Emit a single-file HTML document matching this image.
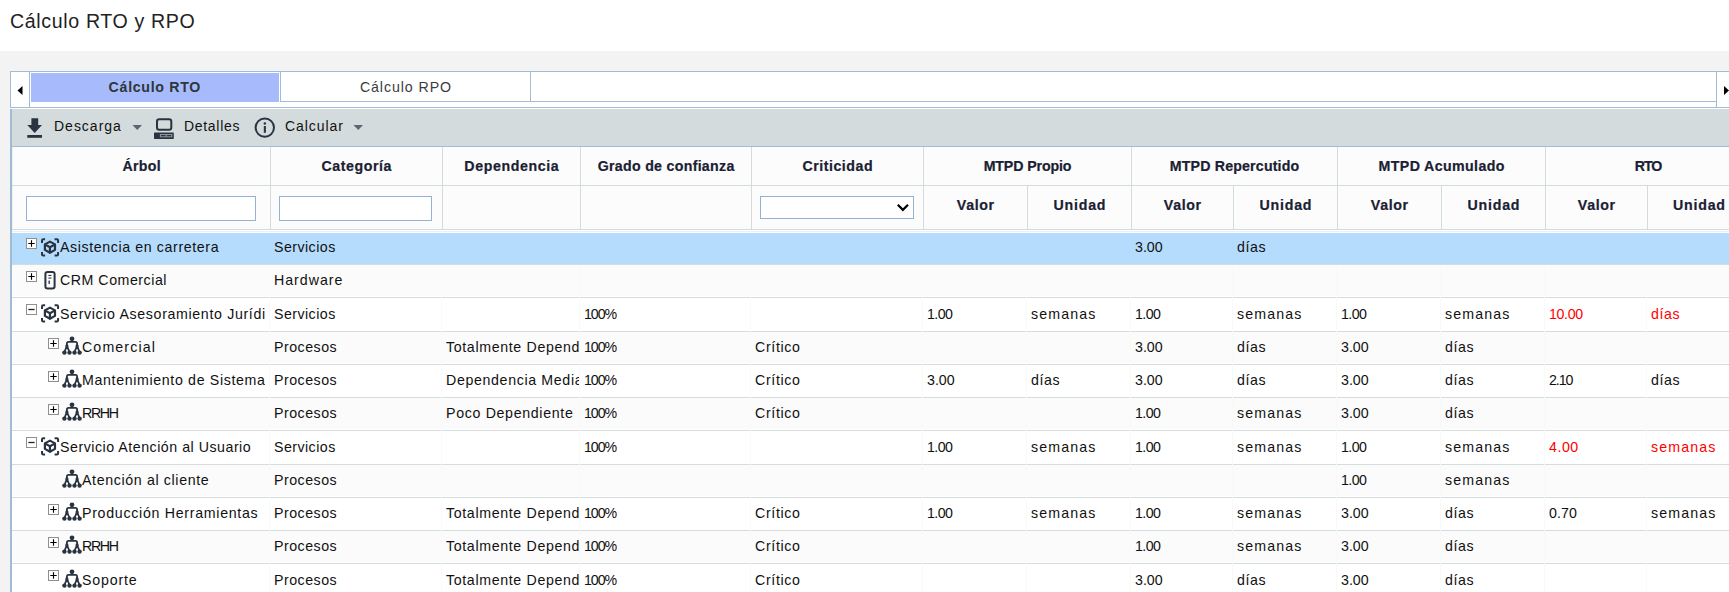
<!DOCTYPE html>
<html><head><meta charset="utf-8"><title>Cálculo RTO y RPO</title>
<style>
html,body{margin:0;padding:0;width:1729px;height:592px;overflow:hidden;background:#fff}
body{position:relative;font-family:"Liberation Sans", sans-serif}
.t{position:absolute;white-space:nowrap;overflow:hidden;font-family:"Liberation Sans", sans-serif}
</style></head><body>
<div style="position:absolute;left:0px;top:0px;width:1729px;height:51px;background:#fff"></div><div style="position:absolute;left:0px;top:51px;width:1729px;height:541px;background:#f3f3f3"></div><div class="t" style="left:10px;top:6px;width:400px;height:30px;line-height:30px;text-align:left;font-size:19.6px;color:#222;letter-spacing:0.64px">Cálculo RTO y RPO</div><div style="position:absolute;left:10px;top:71px;width:1719px;height:37px;background:#fff;border-top:1px solid #a3bcd6;border-left:1px solid #a3bcd6;border-bottom:1px solid #a3bcd6;box-sizing:border-box"></div><div style="position:absolute;left:29px;top:72px;width:1px;height:35px;background:#a3bcd6"></div><svg style="position:absolute;left:16px;top:85px" width="8" height="11"><path d="M1.5 5.5 L6.5 1 L6.5 10 Z" fill="#000"/></svg><div style="position:absolute;left:31px;top:73px;width:248px;height:29px;background:#a7bbfc"></div><div class="t" style="left:30px;top:73px;width:249px;height:29px;line-height:29px;text-align:center;font-size:14.2px;font-weight:bold;color:#2e3639;letter-spacing:0.69px;padding-left:0.69px;box-sizing:border-box">Cálculo RTO</div><div style="position:absolute;left:280px;top:71px;width:251px;height:31px;border:1px solid #a3bcd6;box-sizing:border-box;background:#fff"></div><div class="t" style="left:281px;top:73px;width:249px;height:29px;line-height:29px;text-align:center;font-size:14.2px;color:#3c3c3c;letter-spacing:0.92px;padding-left:0.92px;box-sizing:border-box">Cálculo RPO</div><div style="position:absolute;left:530px;top:101px;width:1186px;height:1px;background:#a3bcd6"></div><div style="position:absolute;left:1716px;top:72px;width:1px;height:35px;background:#a3bcd6"></div><svg style="position:absolute;left:1722px;top:85px" width="8" height="11"><path d="M2 1 L7 5.5 L2 10 Z" fill="#000"/></svg><div style="position:absolute;left:10px;top:108px;width:1719px;height:1px;background:#fff"></div><div style="position:absolute;left:10px;top:109px;width:1719px;height:37px;background:#d3dbdc"></div><div style="position:absolute;left:10px;top:146px;width:1719px;height:1px;background:#a3bcd6"></div><div style="position:absolute;left:10px;top:109px;width:2px;height:483px;background:#9fbbd6"></div><svg style="position:absolute;left:26px;top:117px" width="18" height="22" viewBox="0 0 18 22"><path d="M5.4 1.3 H12.2 V8.1 H16 L8.7 15.9 L1.3 8.1 H5.4 Z" fill="#2a3441"/><rect x="1.3" y="18" width="14.7" height="2.8" fill="#2a3441"/></svg><div class="t" style="left:54px;top:108px;width:80px;height:37px;line-height:37px;text-align:left;font-size:14px;color:#111;letter-spacing:0.99px">Descarga</div><svg style="position:absolute;left:132px;top:124px" width="11" height="7"><path d="M0.5 1 H10 L5.25 6 Z" fill="#5b6670"/></svg><svg style="position:absolute;left:153px;top:117px" width="22" height="23" viewBox="0 0 22 23"><rect x="4" y="2.3" width="14.3" height="10.5" rx="2.2" fill="none" stroke="#2a3441" stroke-width="2"/><rect x="1" y="15.5" width="19.8" height="6.4" rx="0.6" fill="#2a3441"/><rect x="6.9" y="17" width="12.4" height="3.3" fill="#8d969b"/><rect x="8" y="18" width="4.6" height="1.3" fill="#2a3441"/><rect x="13.8" y="18" width="4.3" height="1.3" fill="#2a3441"/></svg><div class="t" style="left:184px;top:108px;width:80px;height:37px;line-height:37px;text-align:left;font-size:14px;color:#111;letter-spacing:0.69px">Detalles</div><svg style="position:absolute;left:254px;top:117px" width="22" height="22" viewBox="0 0 22 22"><circle cx="10.8" cy="10.6" r="9.2" fill="none" stroke="#2a3441" stroke-width="2"/><rect x="9.8" y="9" width="2.1" height="6.8" fill="#2a3441"/><circle cx="10.85" cy="6.6" r="1.25" fill="#2a3441"/></svg><div class="t" style="left:285px;top:108px;width:80px;height:37px;line-height:37px;text-align:left;font-size:14px;color:#111;letter-spacing:0.93px">Calcular</div><svg style="position:absolute;left:353px;top:124px" width="11" height="7"><path d="M0.5 1 H10 L5.25 6 Z" fill="#5b6670"/></svg><div style="position:absolute;left:12px;top:147px;width:1717px;height:83px;background:#fcfcfc"></div><div style="position:absolute;left:12px;top:147px;width:1px;height:83px;background:#eef1f1"></div><div style="position:absolute;left:270px;top:147px;width:1px;height:83px;background:#d3dcdc"></div><div style="position:absolute;left:442px;top:147px;width:1px;height:83px;background:#d3dcdc"></div><div style="position:absolute;left:580px;top:147px;width:1px;height:83px;background:#d3dcdc"></div><div style="position:absolute;left:751px;top:147px;width:1px;height:83px;background:#d3dcdc"></div><div style="position:absolute;left:923px;top:147px;width:1px;height:83px;background:#d3dcdc"></div><div style="position:absolute;left:1131px;top:147px;width:1px;height:83px;background:#d3dcdc"></div><div style="position:absolute;left:1337px;top:147px;width:1px;height:83px;background:#d3dcdc"></div><div style="position:absolute;left:1545px;top:147px;width:1px;height:83px;background:#d3dcdc"></div><div style="position:absolute;left:1027px;top:186px;width:1px;height:44px;background:#d3dcdc"></div><div style="position:absolute;left:1233px;top:186px;width:1px;height:44px;background:#d3dcdc"></div><div style="position:absolute;left:1441px;top:186px;width:1px;height:44px;background:#d3dcdc"></div><div style="position:absolute;left:1647px;top:186px;width:1px;height:44px;background:#d3dcdc"></div><div style="position:absolute;left:12px;top:185px;width:1717px;height:1px;background:#d3dcdc"></div><div style="position:absolute;left:12px;top:229px;width:1717px;height:1px;background:#d3dcdc"></div><div style="position:absolute;left:12px;top:230px;width:1717px;height:3px;background:#fff"></div><div style="position:absolute;left:12px;top:231px;width:1717px;height:1px;background:#eef0f0"></div><div class="t" style="left:13px;top:148px;width:257px;height:37px;line-height:37px;text-align:center;font-size:14.2px;font-weight:bold;color:#1b2033;letter-spacing:0.3px;padding-left:0.3px;box-sizing:border-box;-webkit-text-stroke:0.2px #1b2033">Árbol</div><div class="t" style="left:271px;top:148px;width:171px;height:37px;line-height:37px;text-align:center;font-size:14.2px;font-weight:bold;color:#1b2033;letter-spacing:0.56px;padding-left:0.56px;box-sizing:border-box;-webkit-text-stroke:0.2px #1b2033">Categoría</div><div class="t" style="left:443px;top:148px;width:137px;height:37px;line-height:37px;text-align:center;font-size:14.2px;font-weight:bold;color:#1b2033;letter-spacing:0.61px;padding-left:0.61px;box-sizing:border-box;-webkit-text-stroke:0.2px #1b2033">Dependencia</div><div class="t" style="left:581px;top:148px;width:170px;height:37px;line-height:37px;text-align:center;font-size:14.2px;font-weight:bold;color:#1b2033;letter-spacing:0.29px;padding-left:0.29px;box-sizing:border-box;-webkit-text-stroke:0.2px #1b2033">Grado de confianza</div><div class="t" style="left:752px;top:148px;width:171px;height:37px;line-height:37px;text-align:center;font-size:14.2px;font-weight:bold;color:#1b2033;letter-spacing:0.53px;padding-left:0.53px;box-sizing:border-box;-webkit-text-stroke:0.2px #1b2033">Criticidad</div><div class="t" style="left:924px;top:148px;width:207px;height:37px;line-height:37px;text-align:center;font-size:14.2px;font-weight:bold;color:#1b2033;letter-spacing:-0.12px;padding-left:-0.12px;box-sizing:border-box;-webkit-text-stroke:0.2px #1b2033">MTPD Propio</div><div class="t" style="left:1132px;top:148px;width:205px;height:37px;line-height:37px;text-align:center;font-size:14.2px;font-weight:bold;color:#1b2033;letter-spacing:0.17px;padding-left:0.17px;box-sizing:border-box;-webkit-text-stroke:0.2px #1b2033">MTPD Repercutido</div><div class="t" style="left:1338px;top:148px;width:207px;height:37px;line-height:37px;text-align:center;font-size:14.2px;font-weight:bold;color:#1b2033;letter-spacing:0.38px;padding-left:0.38px;box-sizing:border-box;-webkit-text-stroke:0.2px #1b2033">MTPD Acumulado</div><div class="t" style="left:1546px;top:148px;width:204px;height:37px;line-height:37px;text-align:center;font-size:14.2px;font-weight:bold;color:#1b2033;letter-spacing:-1.0px;padding-left:-1.0px;box-sizing:border-box;-webkit-text-stroke:0.2px #1b2033">RTO</div><div class="t" style="left:924px;top:184px;width:103px;height:43px;line-height:43px;text-align:center;font-size:14.2px;font-weight:bold;color:#1b2033;letter-spacing:0.65px;padding-left:0.65px;box-sizing:border-box;-webkit-text-stroke:0.2px #1b2033">Valor</div><div class="t" style="left:1028px;top:184px;width:103px;height:43px;line-height:43px;text-align:center;font-size:14.2px;font-weight:bold;color:#1b2033;letter-spacing:0.8px;padding-left:0.8px;box-sizing:border-box;-webkit-text-stroke:0.2px #1b2033">Unidad</div><div class="t" style="left:1132px;top:184px;width:101px;height:43px;line-height:43px;text-align:center;font-size:14.2px;font-weight:bold;color:#1b2033;letter-spacing:0.65px;padding-left:0.65px;box-sizing:border-box;-webkit-text-stroke:0.2px #1b2033">Valor</div><div class="t" style="left:1234px;top:184px;width:103px;height:43px;line-height:43px;text-align:center;font-size:14.2px;font-weight:bold;color:#1b2033;letter-spacing:0.8px;padding-left:0.8px;box-sizing:border-box;-webkit-text-stroke:0.2px #1b2033">Unidad</div><div class="t" style="left:1338px;top:184px;width:103px;height:43px;line-height:43px;text-align:center;font-size:14.2px;font-weight:bold;color:#1b2033;letter-spacing:0.65px;padding-left:0.65px;box-sizing:border-box;-webkit-text-stroke:0.2px #1b2033">Valor</div><div class="t" style="left:1442px;top:184px;width:103px;height:43px;line-height:43px;text-align:center;font-size:14.2px;font-weight:bold;color:#1b2033;letter-spacing:0.8px;padding-left:0.8px;box-sizing:border-box;-webkit-text-stroke:0.2px #1b2033">Unidad</div><div class="t" style="left:1546px;top:184px;width:101px;height:43px;line-height:43px;text-align:center;font-size:14.2px;font-weight:bold;color:#1b2033;letter-spacing:0.65px;padding-left:0.65px;box-sizing:border-box;-webkit-text-stroke:0.2px #1b2033">Valor</div><div class="t" style="left:1648px;top:184px;width:102px;height:43px;line-height:43px;text-align:center;font-size:14.2px;font-weight:bold;color:#1b2033;letter-spacing:0.8px;padding-left:0.8px;box-sizing:border-box;-webkit-text-stroke:0.2px #1b2033">Unidad</div><div style="position:absolute;left:26px;top:196px;width:230px;height:25px;background:#fff;border:1px solid #94b1d6;box-sizing:border-box"></div><div style="position:absolute;left:279px;top:196px;width:153px;height:25px;background:#fff;border:1px solid #94b1d6;box-sizing:border-box"></div><div style="position:absolute;left:760px;top:196px;width:154px;height:23px;background:#fff;border:1px solid #94b1d6;box-sizing:border-box"></div><svg style="position:absolute;left:896px;top:202px" width="14" height="11"><path d="M1.8 2.8 L6.9 7.9 L12 2.8" fill="none" stroke="#000" stroke-width="2.2"/></svg><div style="position:absolute;left:12px;top:233px;width:1717px;height:31px;background:#b5dcfd"></div><div style="position:absolute;left:12px;top:264px;width:1717px;height:1px;background:#d5dcdc"></div><svg style="position:absolute;left:26px;top:238px" width="11" height="11" viewBox="0 0 11 11"><rect x="0.5" y="0.5" width="10" height="10" fill="#fff" stroke="#8f8f8f" stroke-width="1"/><path d="M5.5 2.3 V8.7 M2.3 5.5 H8.7" stroke="#000" stroke-width="1.15"/></svg><svg style="position:absolute;left:39px;top:237px" width="22" height="22" viewBox="0 0 22 22"><g fill="none" stroke="#2a3441" stroke-width="2" stroke-linejoin="round"><path d="M3 5.9 V3.4 Q3 2.2 4.2 2.2 H6.1"/><path d="M15.6 2.2 H17.9 Q19.1 2.2 19.1 3.4 V5.9"/><path d="M19.1 15 V17.2 Q19.1 18.4 17.9 18.4 H15.6"/><path d="M6.1 18.4 H4.2 Q3 18.4 3 17.2 V15"/></g><g fill="none" stroke="#2a3441" stroke-width="2.2" stroke-linecap="round" stroke-linejoin="round"><path d="M10.95 4.6 L16 7.4 V12.9 L10.95 15.7 L5.9 12.9 V7.4 Z"/><path d="M6.2 7.6 L10.95 10.2 L15.7 7.6 M10.95 10.2 V15.5"/></g></svg><div class="t" style="left:60px;top:239px;width:205px;height:16px;line-height:16px;text-align:left;font-size:14.2px;color:#111;letter-spacing:0.61px">Asistencia en carretera</div><div class="t" style="left:274px;top:239px;width:167px;height:16px;line-height:16px;text-align:left;font-size:14.2px;color:#111;letter-spacing:0.46px">Servicios</div><div class="t" style="left:1135px;top:239px;width:97px;height:16px;line-height:16px;text-align:left;font-size:14.2px;color:#111;letter-spacing:0.0px">3.00</div><div class="t" style="left:1237px;top:239px;width:99px;height:16px;line-height:16px;text-align:left;font-size:14.2px;color:#111;letter-spacing:0.57px">días</div><div style="position:absolute;left:12px;top:265px;width:1717px;height:32px;background:#fbfbfb"></div><div style="position:absolute;left:12px;top:296px;width:1717px;height:1px;background:#fff"></div><div style="position:absolute;left:12px;top:297px;width:1717px;height:1px;background:#d5dcdc"></div><div style="position:absolute;left:269px;top:265px;width:1px;height:31px;background:#f8f9f9"></div><div style="position:absolute;left:269px;top:297px;width:1px;height:1px;background:#f4f6f6"></div><div style="position:absolute;left:441px;top:265px;width:1px;height:31px;background:#f8f9f9"></div><div style="position:absolute;left:441px;top:297px;width:1px;height:1px;background:#f4f6f6"></div><div style="position:absolute;left:579px;top:265px;width:1px;height:31px;background:#f8f9f9"></div><div style="position:absolute;left:579px;top:297px;width:1px;height:1px;background:#f4f6f6"></div><div style="position:absolute;left:750px;top:265px;width:1px;height:31px;background:#f8f9f9"></div><div style="position:absolute;left:750px;top:297px;width:1px;height:1px;background:#f4f6f6"></div><div style="position:absolute;left:922px;top:265px;width:1px;height:31px;background:#f8f9f9"></div><div style="position:absolute;left:922px;top:297px;width:1px;height:1px;background:#f4f6f6"></div><div style="position:absolute;left:1026px;top:265px;width:1px;height:31px;background:#f8f9f9"></div><div style="position:absolute;left:1026px;top:297px;width:1px;height:1px;background:#f4f6f6"></div><div style="position:absolute;left:1130px;top:265px;width:1px;height:31px;background:#f8f9f9"></div><div style="position:absolute;left:1130px;top:297px;width:1px;height:1px;background:#f4f6f6"></div><div style="position:absolute;left:1232px;top:265px;width:1px;height:31px;background:#f8f9f9"></div><div style="position:absolute;left:1232px;top:297px;width:1px;height:1px;background:#f4f6f6"></div><div style="position:absolute;left:1336px;top:265px;width:1px;height:31px;background:#f8f9f9"></div><div style="position:absolute;left:1336px;top:297px;width:1px;height:1px;background:#f4f6f6"></div><div style="position:absolute;left:1440px;top:265px;width:1px;height:31px;background:#f8f9f9"></div><div style="position:absolute;left:1440px;top:297px;width:1px;height:1px;background:#f4f6f6"></div><div style="position:absolute;left:1544px;top:265px;width:1px;height:31px;background:#f8f9f9"></div><div style="position:absolute;left:1544px;top:297px;width:1px;height:1px;background:#f4f6f6"></div><div style="position:absolute;left:1646px;top:265px;width:1px;height:31px;background:#f8f9f9"></div><div style="position:absolute;left:1646px;top:297px;width:1px;height:1px;background:#f4f6f6"></div><svg style="position:absolute;left:26px;top:271px" width="11" height="11" viewBox="0 0 11 11"><rect x="0.5" y="0.5" width="10" height="10" fill="#fff" stroke="#8f8f8f" stroke-width="1"/><path d="M5.5 2.3 V8.7 M2.3 5.5 H8.7" stroke="#000" stroke-width="1.15"/></svg><svg style="position:absolute;left:43px;top:270px" width="14" height="21" viewBox="0 0 14 21"><rect x="2.4" y="1.9" width="9.2" height="16.6" rx="2.2" fill="none" stroke="#2a3441" stroke-width="2"/><rect x="5.4" y="4.9" width="3" height="1.1" fill="#2a3441"/><rect x="5.4" y="7.5" width="3" height="1.1" fill="#2a3441"/><rect x="5.5" y="10.6" width="1.4" height="3.3" fill="#2a3441"/></svg><div class="t" style="left:60px;top:272px;width:205px;height:16px;line-height:16px;text-align:left;font-size:14.2px;color:#111;letter-spacing:0.53px">CRM Comercial</div><div class="t" style="left:274px;top:272px;width:167px;height:16px;line-height:16px;text-align:left;font-size:14.2px;color:#111;letter-spacing:0.99px">Hardware</div><div style="position:absolute;left:12px;top:298px;width:1717px;height:33px;background:#ffffff"></div><div style="position:absolute;left:12px;top:330px;width:1717px;height:1px;background:#fff"></div><div style="position:absolute;left:12px;top:331px;width:1717px;height:1px;background:#d5dcdc"></div><div style="position:absolute;left:269px;top:298px;width:1px;height:32px;background:#f8f9f9"></div><div style="position:absolute;left:269px;top:331px;width:1px;height:1px;background:#f4f6f6"></div><div style="position:absolute;left:441px;top:298px;width:1px;height:32px;background:#f8f9f9"></div><div style="position:absolute;left:441px;top:331px;width:1px;height:1px;background:#f4f6f6"></div><div style="position:absolute;left:579px;top:298px;width:1px;height:32px;background:#f8f9f9"></div><div style="position:absolute;left:579px;top:331px;width:1px;height:1px;background:#f4f6f6"></div><div style="position:absolute;left:750px;top:298px;width:1px;height:32px;background:#f8f9f9"></div><div style="position:absolute;left:750px;top:331px;width:1px;height:1px;background:#f4f6f6"></div><div style="position:absolute;left:922px;top:298px;width:1px;height:32px;background:#f8f9f9"></div><div style="position:absolute;left:922px;top:331px;width:1px;height:1px;background:#f4f6f6"></div><div style="position:absolute;left:1026px;top:298px;width:1px;height:32px;background:#f8f9f9"></div><div style="position:absolute;left:1026px;top:331px;width:1px;height:1px;background:#f4f6f6"></div><div style="position:absolute;left:1130px;top:298px;width:1px;height:32px;background:#f8f9f9"></div><div style="position:absolute;left:1130px;top:331px;width:1px;height:1px;background:#f4f6f6"></div><div style="position:absolute;left:1232px;top:298px;width:1px;height:32px;background:#f8f9f9"></div><div style="position:absolute;left:1232px;top:331px;width:1px;height:1px;background:#f4f6f6"></div><div style="position:absolute;left:1336px;top:298px;width:1px;height:32px;background:#f8f9f9"></div><div style="position:absolute;left:1336px;top:331px;width:1px;height:1px;background:#f4f6f6"></div><div style="position:absolute;left:1440px;top:298px;width:1px;height:32px;background:#f8f9f9"></div><div style="position:absolute;left:1440px;top:331px;width:1px;height:1px;background:#f4f6f6"></div><div style="position:absolute;left:1544px;top:298px;width:1px;height:32px;background:#f8f9f9"></div><div style="position:absolute;left:1544px;top:331px;width:1px;height:1px;background:#f4f6f6"></div><div style="position:absolute;left:1646px;top:298px;width:1px;height:32px;background:#f8f9f9"></div><div style="position:absolute;left:1646px;top:331px;width:1px;height:1px;background:#f4f6f6"></div><svg style="position:absolute;left:26px;top:304px" width="11" height="11" viewBox="0 0 11 11"><rect x="0.5" y="0.5" width="10" height="10" fill="#fff" stroke="#8f8f8f" stroke-width="1"/><path d="M2.4 5.5 H8.6" stroke="#222" stroke-width="1.3"/></svg><svg style="position:absolute;left:39px;top:303px" width="22" height="22" viewBox="0 0 22 22"><g fill="none" stroke="#2a3441" stroke-width="2" stroke-linejoin="round"><path d="M3 5.9 V3.4 Q3 2.2 4.2 2.2 H6.1"/><path d="M15.6 2.2 H17.9 Q19.1 2.2 19.1 3.4 V5.9"/><path d="M19.1 15 V17.2 Q19.1 18.4 17.9 18.4 H15.6"/><path d="M6.1 18.4 H4.2 Q3 18.4 3 17.2 V15"/></g><g fill="none" stroke="#2a3441" stroke-width="2.2" stroke-linecap="round" stroke-linejoin="round"><path d="M10.95 4.6 L16 7.4 V12.9 L10.95 15.7 L5.9 12.9 V7.4 Z"/><path d="M6.2 7.6 L10.95 10.2 L15.7 7.6 M10.95 10.2 V15.5"/></g></svg><div class="t" style="left:60px;top:306px;width:205px;height:16px;line-height:16px;text-align:left;font-size:14.2px;color:#111;letter-spacing:0.65px">Servicio Asesoramiento Jurídico</div><div class="t" style="left:274px;top:306px;width:167px;height:16px;line-height:16px;text-align:left;font-size:14.2px;color:#111;letter-spacing:0.46px">Servicios</div><div class="t" style="left:584px;top:306px;width:166px;height:16px;line-height:16px;text-align:left;font-size:14.2px;color:#111;letter-spacing:-1.07px">100%</div><div class="t" style="left:927px;top:306px;width:99px;height:16px;line-height:16px;text-align:left;font-size:14.2px;color:#111;letter-spacing:-0.6px">1.00</div><div class="t" style="left:1031px;top:306px;width:99px;height:16px;line-height:16px;text-align:left;font-size:14.2px;color:#111;letter-spacing:1.12px">semanas</div><div class="t" style="left:1135px;top:306px;width:97px;height:16px;line-height:16px;text-align:left;font-size:14.2px;color:#111;letter-spacing:-0.6px">1.00</div><div class="t" style="left:1237px;top:306px;width:99px;height:16px;line-height:16px;text-align:left;font-size:14.2px;color:#111;letter-spacing:1.12px">semanas</div><div class="t" style="left:1341px;top:306px;width:99px;height:16px;line-height:16px;text-align:left;font-size:14.2px;color:#111;letter-spacing:-0.6px">1.00</div><div class="t" style="left:1445px;top:306px;width:99px;height:16px;line-height:16px;text-align:left;font-size:14.2px;color:#111;letter-spacing:1.12px">semanas</div><div class="t" style="left:1549px;top:306px;width:97px;height:16px;line-height:16px;text-align:left;font-size:14.2px;color:#111;letter-spacing:-0.35px;color:#ff0000">10.00</div><div class="t" style="left:1651px;top:306px;width:98px;height:16px;line-height:16px;text-align:left;font-size:14.2px;color:#111;letter-spacing:0.57px;color:#ff0000">días</div><div style="position:absolute;left:12px;top:332px;width:1717px;height:32px;background:#fbfbfb"></div><div style="position:absolute;left:12px;top:363px;width:1717px;height:1px;background:#fff"></div><div style="position:absolute;left:12px;top:364px;width:1717px;height:1px;background:#d5dcdc"></div><div style="position:absolute;left:269px;top:332px;width:1px;height:31px;background:#f8f9f9"></div><div style="position:absolute;left:269px;top:364px;width:1px;height:1px;background:#f4f6f6"></div><div style="position:absolute;left:441px;top:332px;width:1px;height:31px;background:#f8f9f9"></div><div style="position:absolute;left:441px;top:364px;width:1px;height:1px;background:#f4f6f6"></div><div style="position:absolute;left:579px;top:332px;width:1px;height:31px;background:#f8f9f9"></div><div style="position:absolute;left:579px;top:364px;width:1px;height:1px;background:#f4f6f6"></div><div style="position:absolute;left:750px;top:332px;width:1px;height:31px;background:#f8f9f9"></div><div style="position:absolute;left:750px;top:364px;width:1px;height:1px;background:#f4f6f6"></div><div style="position:absolute;left:922px;top:332px;width:1px;height:31px;background:#f8f9f9"></div><div style="position:absolute;left:922px;top:364px;width:1px;height:1px;background:#f4f6f6"></div><div style="position:absolute;left:1026px;top:332px;width:1px;height:31px;background:#f8f9f9"></div><div style="position:absolute;left:1026px;top:364px;width:1px;height:1px;background:#f4f6f6"></div><div style="position:absolute;left:1130px;top:332px;width:1px;height:31px;background:#f8f9f9"></div><div style="position:absolute;left:1130px;top:364px;width:1px;height:1px;background:#f4f6f6"></div><div style="position:absolute;left:1232px;top:332px;width:1px;height:31px;background:#f8f9f9"></div><div style="position:absolute;left:1232px;top:364px;width:1px;height:1px;background:#f4f6f6"></div><div style="position:absolute;left:1336px;top:332px;width:1px;height:31px;background:#f8f9f9"></div><div style="position:absolute;left:1336px;top:364px;width:1px;height:1px;background:#f4f6f6"></div><div style="position:absolute;left:1440px;top:332px;width:1px;height:31px;background:#f8f9f9"></div><div style="position:absolute;left:1440px;top:364px;width:1px;height:1px;background:#f4f6f6"></div><div style="position:absolute;left:1544px;top:332px;width:1px;height:31px;background:#f8f9f9"></div><div style="position:absolute;left:1544px;top:364px;width:1px;height:1px;background:#f4f6f6"></div><div style="position:absolute;left:1646px;top:332px;width:1px;height:31px;background:#f8f9f9"></div><div style="position:absolute;left:1646px;top:364px;width:1px;height:1px;background:#f4f6f6"></div><svg style="position:absolute;left:48px;top:338px" width="11" height="11" viewBox="0 0 11 11"><rect x="0.5" y="0.5" width="10" height="10" fill="#fff" stroke="#8f8f8f" stroke-width="1"/><path d="M5.5 2.3 V8.7 M2.3 5.5 H8.7" stroke="#000" stroke-width="1.15"/></svg><svg style="position:absolute;left:62px;top:336px" width="20" height="20" viewBox="0 0 20 20"><g fill="#2a3441"><circle cx="10" cy="2.8" r="2.4"/><circle cx="4.9" cy="9.9" r="1.6"/><circle cx="15.1" cy="9.9" r="1.6"/><circle cx="2.4" cy="16.6" r="2.2"/><circle cx="7.5" cy="16.6" r="2.2"/><circle cx="12.5" cy="16.6" r="2.2"/><circle cx="17.6" cy="16.6" r="2.2"/></g><g fill="none" stroke="#2a3441" stroke-width="1.8" stroke-linejoin="round"><path d="M10 3 V5.8 M4.9 9.9 V7.4 Q4.9 5.8 6.5 5.8 H13.5 Q15.1 5.8 15.1 7.4 V9.9 M4.9 9.9 L2.5 16 M4.9 9.9 L7.5 16 M15.1 9.9 L12.5 16 M15.1 9.9 L17.5 16"/></g></svg><div class="t" style="left:82px;top:339px;width:183px;height:16px;line-height:16px;text-align:left;font-size:14.2px;color:#111;letter-spacing:1.12px">Comercial</div><div class="t" style="left:274px;top:339px;width:167px;height:16px;line-height:16px;text-align:left;font-size:14.2px;color:#111;letter-spacing:0.5px">Procesos</div><div class="t" style="left:446px;top:339px;width:133px;height:16px;line-height:16px;text-align:left;font-size:14.2px;color:#111;letter-spacing:0.65px">Totalmente Dependiente</div><div class="t" style="left:584px;top:339px;width:166px;height:16px;line-height:16px;text-align:left;font-size:14.2px;color:#111;letter-spacing:-1.07px">100%</div><div class="t" style="left:755px;top:339px;width:167px;height:16px;line-height:16px;text-align:left;font-size:14.2px;color:#111;letter-spacing:0.67px">Crítico</div><div class="t" style="left:1135px;top:339px;width:97px;height:16px;line-height:16px;text-align:left;font-size:14.2px;color:#111;letter-spacing:0.0px">3.00</div><div class="t" style="left:1237px;top:339px;width:99px;height:16px;line-height:16px;text-align:left;font-size:14.2px;color:#111;letter-spacing:0.57px">días</div><div class="t" style="left:1341px;top:339px;width:99px;height:16px;line-height:16px;text-align:left;font-size:14.2px;color:#111;letter-spacing:0.0px">3.00</div><div class="t" style="left:1445px;top:339px;width:99px;height:16px;line-height:16px;text-align:left;font-size:14.2px;color:#111;letter-spacing:0.57px">días</div><div style="position:absolute;left:12px;top:365px;width:1717px;height:32px;background:#ffffff"></div><div style="position:absolute;left:12px;top:396px;width:1717px;height:1px;background:#fff"></div><div style="position:absolute;left:12px;top:397px;width:1717px;height:1px;background:#d5dcdc"></div><div style="position:absolute;left:269px;top:365px;width:1px;height:31px;background:#f8f9f9"></div><div style="position:absolute;left:269px;top:397px;width:1px;height:1px;background:#f4f6f6"></div><div style="position:absolute;left:441px;top:365px;width:1px;height:31px;background:#f8f9f9"></div><div style="position:absolute;left:441px;top:397px;width:1px;height:1px;background:#f4f6f6"></div><div style="position:absolute;left:579px;top:365px;width:1px;height:31px;background:#f8f9f9"></div><div style="position:absolute;left:579px;top:397px;width:1px;height:1px;background:#f4f6f6"></div><div style="position:absolute;left:750px;top:365px;width:1px;height:31px;background:#f8f9f9"></div><div style="position:absolute;left:750px;top:397px;width:1px;height:1px;background:#f4f6f6"></div><div style="position:absolute;left:922px;top:365px;width:1px;height:31px;background:#f8f9f9"></div><div style="position:absolute;left:922px;top:397px;width:1px;height:1px;background:#f4f6f6"></div><div style="position:absolute;left:1026px;top:365px;width:1px;height:31px;background:#f8f9f9"></div><div style="position:absolute;left:1026px;top:397px;width:1px;height:1px;background:#f4f6f6"></div><div style="position:absolute;left:1130px;top:365px;width:1px;height:31px;background:#f8f9f9"></div><div style="position:absolute;left:1130px;top:397px;width:1px;height:1px;background:#f4f6f6"></div><div style="position:absolute;left:1232px;top:365px;width:1px;height:31px;background:#f8f9f9"></div><div style="position:absolute;left:1232px;top:397px;width:1px;height:1px;background:#f4f6f6"></div><div style="position:absolute;left:1336px;top:365px;width:1px;height:31px;background:#f8f9f9"></div><div style="position:absolute;left:1336px;top:397px;width:1px;height:1px;background:#f4f6f6"></div><div style="position:absolute;left:1440px;top:365px;width:1px;height:31px;background:#f8f9f9"></div><div style="position:absolute;left:1440px;top:397px;width:1px;height:1px;background:#f4f6f6"></div><div style="position:absolute;left:1544px;top:365px;width:1px;height:31px;background:#f8f9f9"></div><div style="position:absolute;left:1544px;top:397px;width:1px;height:1px;background:#f4f6f6"></div><div style="position:absolute;left:1646px;top:365px;width:1px;height:31px;background:#f8f9f9"></div><div style="position:absolute;left:1646px;top:397px;width:1px;height:1px;background:#f4f6f6"></div><svg style="position:absolute;left:48px;top:371px" width="11" height="11" viewBox="0 0 11 11"><rect x="0.5" y="0.5" width="10" height="10" fill="#fff" stroke="#8f8f8f" stroke-width="1"/><path d="M5.5 2.3 V8.7 M2.3 5.5 H8.7" stroke="#000" stroke-width="1.15"/></svg><svg style="position:absolute;left:62px;top:369px" width="20" height="20" viewBox="0 0 20 20"><g fill="#2a3441"><circle cx="10" cy="2.8" r="2.4"/><circle cx="4.9" cy="9.9" r="1.6"/><circle cx="15.1" cy="9.9" r="1.6"/><circle cx="2.4" cy="16.6" r="2.2"/><circle cx="7.5" cy="16.6" r="2.2"/><circle cx="12.5" cy="16.6" r="2.2"/><circle cx="17.6" cy="16.6" r="2.2"/></g><g fill="none" stroke="#2a3441" stroke-width="1.8" stroke-linejoin="round"><path d="M10 3 V5.8 M4.9 9.9 V7.4 Q4.9 5.8 6.5 5.8 H13.5 Q15.1 5.8 15.1 7.4 V9.9 M4.9 9.9 L2.5 16 M4.9 9.9 L7.5 16 M15.1 9.9 L12.5 16 M15.1 9.9 L17.5 16"/></g></svg><div class="t" style="left:82px;top:372px;width:183px;height:16px;line-height:16px;text-align:left;font-size:14.2px;color:#111;letter-spacing:0.65px">Mantenimiento de Sistemas</div><div class="t" style="left:274px;top:372px;width:167px;height:16px;line-height:16px;text-align:left;font-size:14.2px;color:#111;letter-spacing:0.5px">Procesos</div><div class="t" style="left:446px;top:372px;width:133px;height:16px;line-height:16px;text-align:left;font-size:14.2px;color:#111;letter-spacing:0.65px">Dependencia Media</div><div class="t" style="left:584px;top:372px;width:166px;height:16px;line-height:16px;text-align:left;font-size:14.2px;color:#111;letter-spacing:-1.07px">100%</div><div class="t" style="left:755px;top:372px;width:167px;height:16px;line-height:16px;text-align:left;font-size:14.2px;color:#111;letter-spacing:0.67px">Crítico</div><div class="t" style="left:927px;top:372px;width:99px;height:16px;line-height:16px;text-align:left;font-size:14.2px;color:#111;letter-spacing:0.0px">3.00</div><div class="t" style="left:1031px;top:372px;width:99px;height:16px;line-height:16px;text-align:left;font-size:14.2px;color:#111;letter-spacing:0.57px">días</div><div class="t" style="left:1135px;top:372px;width:97px;height:16px;line-height:16px;text-align:left;font-size:14.2px;color:#111;letter-spacing:0.0px">3.00</div><div class="t" style="left:1237px;top:372px;width:99px;height:16px;line-height:16px;text-align:left;font-size:14.2px;color:#111;letter-spacing:0.57px">días</div><div class="t" style="left:1341px;top:372px;width:99px;height:16px;line-height:16px;text-align:left;font-size:14.2px;color:#111;letter-spacing:0.0px">3.00</div><div class="t" style="left:1445px;top:372px;width:99px;height:16px;line-height:16px;text-align:left;font-size:14.2px;color:#111;letter-spacing:0.57px">días</div><div class="t" style="left:1549px;top:372px;width:97px;height:16px;line-height:16px;text-align:left;font-size:14.2px;color:#111;letter-spacing:-1.1px">2.10</div><div class="t" style="left:1651px;top:372px;width:98px;height:16px;line-height:16px;text-align:left;font-size:14.2px;color:#111;letter-spacing:0.57px">días</div><div style="position:absolute;left:12px;top:398px;width:1717px;height:32px;background:#fbfbfb"></div><div style="position:absolute;left:12px;top:429px;width:1717px;height:1px;background:#fff"></div><div style="position:absolute;left:12px;top:430px;width:1717px;height:1px;background:#d5dcdc"></div><div style="position:absolute;left:269px;top:398px;width:1px;height:31px;background:#f8f9f9"></div><div style="position:absolute;left:269px;top:430px;width:1px;height:1px;background:#f4f6f6"></div><div style="position:absolute;left:441px;top:398px;width:1px;height:31px;background:#f8f9f9"></div><div style="position:absolute;left:441px;top:430px;width:1px;height:1px;background:#f4f6f6"></div><div style="position:absolute;left:579px;top:398px;width:1px;height:31px;background:#f8f9f9"></div><div style="position:absolute;left:579px;top:430px;width:1px;height:1px;background:#f4f6f6"></div><div style="position:absolute;left:750px;top:398px;width:1px;height:31px;background:#f8f9f9"></div><div style="position:absolute;left:750px;top:430px;width:1px;height:1px;background:#f4f6f6"></div><div style="position:absolute;left:922px;top:398px;width:1px;height:31px;background:#f8f9f9"></div><div style="position:absolute;left:922px;top:430px;width:1px;height:1px;background:#f4f6f6"></div><div style="position:absolute;left:1026px;top:398px;width:1px;height:31px;background:#f8f9f9"></div><div style="position:absolute;left:1026px;top:430px;width:1px;height:1px;background:#f4f6f6"></div><div style="position:absolute;left:1130px;top:398px;width:1px;height:31px;background:#f8f9f9"></div><div style="position:absolute;left:1130px;top:430px;width:1px;height:1px;background:#f4f6f6"></div><div style="position:absolute;left:1232px;top:398px;width:1px;height:31px;background:#f8f9f9"></div><div style="position:absolute;left:1232px;top:430px;width:1px;height:1px;background:#f4f6f6"></div><div style="position:absolute;left:1336px;top:398px;width:1px;height:31px;background:#f8f9f9"></div><div style="position:absolute;left:1336px;top:430px;width:1px;height:1px;background:#f4f6f6"></div><div style="position:absolute;left:1440px;top:398px;width:1px;height:31px;background:#f8f9f9"></div><div style="position:absolute;left:1440px;top:430px;width:1px;height:1px;background:#f4f6f6"></div><div style="position:absolute;left:1544px;top:398px;width:1px;height:31px;background:#f8f9f9"></div><div style="position:absolute;left:1544px;top:430px;width:1px;height:1px;background:#f4f6f6"></div><div style="position:absolute;left:1646px;top:398px;width:1px;height:31px;background:#f8f9f9"></div><div style="position:absolute;left:1646px;top:430px;width:1px;height:1px;background:#f4f6f6"></div><svg style="position:absolute;left:48px;top:404px" width="11" height="11" viewBox="0 0 11 11"><rect x="0.5" y="0.5" width="10" height="10" fill="#fff" stroke="#8f8f8f" stroke-width="1"/><path d="M5.5 2.3 V8.7 M2.3 5.5 H8.7" stroke="#000" stroke-width="1.15"/></svg><svg style="position:absolute;left:62px;top:402px" width="20" height="20" viewBox="0 0 20 20"><g fill="#2a3441"><circle cx="10" cy="2.8" r="2.4"/><circle cx="4.9" cy="9.9" r="1.6"/><circle cx="15.1" cy="9.9" r="1.6"/><circle cx="2.4" cy="16.6" r="2.2"/><circle cx="7.5" cy="16.6" r="2.2"/><circle cx="12.5" cy="16.6" r="2.2"/><circle cx="17.6" cy="16.6" r="2.2"/></g><g fill="none" stroke="#2a3441" stroke-width="1.8" stroke-linejoin="round"><path d="M10 3 V5.8 M4.9 9.9 V7.4 Q4.9 5.8 6.5 5.8 H13.5 Q15.1 5.8 15.1 7.4 V9.9 M4.9 9.9 L2.5 16 M4.9 9.9 L7.5 16 M15.1 9.9 L12.5 16 M15.1 9.9 L17.5 16"/></g></svg><div class="t" style="left:82px;top:405px;width:183px;height:16px;line-height:16px;text-align:left;font-size:14.2px;color:#111;letter-spacing:-1.33px">RRHH</div><div class="t" style="left:274px;top:405px;width:167px;height:16px;line-height:16px;text-align:left;font-size:14.2px;color:#111;letter-spacing:0.5px">Procesos</div><div class="t" style="left:446px;top:405px;width:133px;height:16px;line-height:16px;text-align:left;font-size:14.2px;color:#111;letter-spacing:0.67px">Poco Dependiente</div><div class="t" style="left:584px;top:405px;width:166px;height:16px;line-height:16px;text-align:left;font-size:14.2px;color:#111;letter-spacing:-1.07px">100%</div><div class="t" style="left:755px;top:405px;width:167px;height:16px;line-height:16px;text-align:left;font-size:14.2px;color:#111;letter-spacing:0.67px">Crítico</div><div class="t" style="left:1135px;top:405px;width:97px;height:16px;line-height:16px;text-align:left;font-size:14.2px;color:#111;letter-spacing:-0.6px">1.00</div><div class="t" style="left:1237px;top:405px;width:99px;height:16px;line-height:16px;text-align:left;font-size:14.2px;color:#111;letter-spacing:1.12px">semanas</div><div class="t" style="left:1341px;top:405px;width:99px;height:16px;line-height:16px;text-align:left;font-size:14.2px;color:#111;letter-spacing:0.0px">3.00</div><div class="t" style="left:1445px;top:405px;width:99px;height:16px;line-height:16px;text-align:left;font-size:14.2px;color:#111;letter-spacing:0.57px">días</div><div style="position:absolute;left:12px;top:431px;width:1717px;height:33px;background:#ffffff"></div><div style="position:absolute;left:12px;top:463px;width:1717px;height:1px;background:#fff"></div><div style="position:absolute;left:12px;top:464px;width:1717px;height:1px;background:#d5dcdc"></div><div style="position:absolute;left:269px;top:431px;width:1px;height:32px;background:#f8f9f9"></div><div style="position:absolute;left:269px;top:464px;width:1px;height:1px;background:#f4f6f6"></div><div style="position:absolute;left:441px;top:431px;width:1px;height:32px;background:#f8f9f9"></div><div style="position:absolute;left:441px;top:464px;width:1px;height:1px;background:#f4f6f6"></div><div style="position:absolute;left:579px;top:431px;width:1px;height:32px;background:#f8f9f9"></div><div style="position:absolute;left:579px;top:464px;width:1px;height:1px;background:#f4f6f6"></div><div style="position:absolute;left:750px;top:431px;width:1px;height:32px;background:#f8f9f9"></div><div style="position:absolute;left:750px;top:464px;width:1px;height:1px;background:#f4f6f6"></div><div style="position:absolute;left:922px;top:431px;width:1px;height:32px;background:#f8f9f9"></div><div style="position:absolute;left:922px;top:464px;width:1px;height:1px;background:#f4f6f6"></div><div style="position:absolute;left:1026px;top:431px;width:1px;height:32px;background:#f8f9f9"></div><div style="position:absolute;left:1026px;top:464px;width:1px;height:1px;background:#f4f6f6"></div><div style="position:absolute;left:1130px;top:431px;width:1px;height:32px;background:#f8f9f9"></div><div style="position:absolute;left:1130px;top:464px;width:1px;height:1px;background:#f4f6f6"></div><div style="position:absolute;left:1232px;top:431px;width:1px;height:32px;background:#f8f9f9"></div><div style="position:absolute;left:1232px;top:464px;width:1px;height:1px;background:#f4f6f6"></div><div style="position:absolute;left:1336px;top:431px;width:1px;height:32px;background:#f8f9f9"></div><div style="position:absolute;left:1336px;top:464px;width:1px;height:1px;background:#f4f6f6"></div><div style="position:absolute;left:1440px;top:431px;width:1px;height:32px;background:#f8f9f9"></div><div style="position:absolute;left:1440px;top:464px;width:1px;height:1px;background:#f4f6f6"></div><div style="position:absolute;left:1544px;top:431px;width:1px;height:32px;background:#f8f9f9"></div><div style="position:absolute;left:1544px;top:464px;width:1px;height:1px;background:#f4f6f6"></div><div style="position:absolute;left:1646px;top:431px;width:1px;height:32px;background:#f8f9f9"></div><div style="position:absolute;left:1646px;top:464px;width:1px;height:1px;background:#f4f6f6"></div><svg style="position:absolute;left:26px;top:437px" width="11" height="11" viewBox="0 0 11 11"><rect x="0.5" y="0.5" width="10" height="10" fill="#fff" stroke="#8f8f8f" stroke-width="1"/><path d="M2.4 5.5 H8.6" stroke="#222" stroke-width="1.3"/></svg><svg style="position:absolute;left:39px;top:436px" width="22" height="22" viewBox="0 0 22 22"><g fill="none" stroke="#2a3441" stroke-width="2" stroke-linejoin="round"><path d="M3 5.9 V3.4 Q3 2.2 4.2 2.2 H6.1"/><path d="M15.6 2.2 H17.9 Q19.1 2.2 19.1 3.4 V5.9"/><path d="M19.1 15 V17.2 Q19.1 18.4 17.9 18.4 H15.6"/><path d="M6.1 18.4 H4.2 Q3 18.4 3 17.2 V15"/></g><g fill="none" stroke="#2a3441" stroke-width="2.2" stroke-linecap="round" stroke-linejoin="round"><path d="M10.95 4.6 L16 7.4 V12.9 L10.95 15.7 L5.9 12.9 V7.4 Z"/><path d="M6.2 7.6 L10.95 10.2 L15.7 7.6 M10.95 10.2 V15.5"/></g></svg><div class="t" style="left:60px;top:439px;width:205px;height:16px;line-height:16px;text-align:left;font-size:14.2px;color:#111;letter-spacing:0.52px">Servicio Atención al Usuario</div><div class="t" style="left:274px;top:439px;width:167px;height:16px;line-height:16px;text-align:left;font-size:14.2px;color:#111;letter-spacing:0.46px">Servicios</div><div class="t" style="left:584px;top:439px;width:166px;height:16px;line-height:16px;text-align:left;font-size:14.2px;color:#111;letter-spacing:-1.07px">100%</div><div class="t" style="left:927px;top:439px;width:99px;height:16px;line-height:16px;text-align:left;font-size:14.2px;color:#111;letter-spacing:-0.6px">1.00</div><div class="t" style="left:1031px;top:439px;width:99px;height:16px;line-height:16px;text-align:left;font-size:14.2px;color:#111;letter-spacing:1.12px">semanas</div><div class="t" style="left:1135px;top:439px;width:97px;height:16px;line-height:16px;text-align:left;font-size:14.2px;color:#111;letter-spacing:-0.6px">1.00</div><div class="t" style="left:1237px;top:439px;width:99px;height:16px;line-height:16px;text-align:left;font-size:14.2px;color:#111;letter-spacing:1.12px">semanas</div><div class="t" style="left:1341px;top:439px;width:99px;height:16px;line-height:16px;text-align:left;font-size:14.2px;color:#111;letter-spacing:-0.6px">1.00</div><div class="t" style="left:1445px;top:439px;width:99px;height:16px;line-height:16px;text-align:left;font-size:14.2px;color:#111;letter-spacing:1.12px">semanas</div><div class="t" style="left:1549px;top:439px;width:97px;height:16px;line-height:16px;text-align:left;font-size:14.2px;color:#111;letter-spacing:0.53px;color:#ff0000">4.00</div><div class="t" style="left:1651px;top:439px;width:98px;height:16px;line-height:16px;text-align:left;font-size:14.2px;color:#111;letter-spacing:1.12px;color:#ff0000">semanas</div><div style="position:absolute;left:12px;top:465px;width:1717px;height:32px;background:#fbfbfb"></div><div style="position:absolute;left:12px;top:496px;width:1717px;height:1px;background:#fff"></div><div style="position:absolute;left:12px;top:497px;width:1717px;height:1px;background:#d5dcdc"></div><div style="position:absolute;left:269px;top:465px;width:1px;height:31px;background:#f8f9f9"></div><div style="position:absolute;left:269px;top:497px;width:1px;height:1px;background:#f4f6f6"></div><div style="position:absolute;left:441px;top:465px;width:1px;height:31px;background:#f8f9f9"></div><div style="position:absolute;left:441px;top:497px;width:1px;height:1px;background:#f4f6f6"></div><div style="position:absolute;left:579px;top:465px;width:1px;height:31px;background:#f8f9f9"></div><div style="position:absolute;left:579px;top:497px;width:1px;height:1px;background:#f4f6f6"></div><div style="position:absolute;left:750px;top:465px;width:1px;height:31px;background:#f8f9f9"></div><div style="position:absolute;left:750px;top:497px;width:1px;height:1px;background:#f4f6f6"></div><div style="position:absolute;left:922px;top:465px;width:1px;height:31px;background:#f8f9f9"></div><div style="position:absolute;left:922px;top:497px;width:1px;height:1px;background:#f4f6f6"></div><div style="position:absolute;left:1026px;top:465px;width:1px;height:31px;background:#f8f9f9"></div><div style="position:absolute;left:1026px;top:497px;width:1px;height:1px;background:#f4f6f6"></div><div style="position:absolute;left:1130px;top:465px;width:1px;height:31px;background:#f8f9f9"></div><div style="position:absolute;left:1130px;top:497px;width:1px;height:1px;background:#f4f6f6"></div><div style="position:absolute;left:1232px;top:465px;width:1px;height:31px;background:#f8f9f9"></div><div style="position:absolute;left:1232px;top:497px;width:1px;height:1px;background:#f4f6f6"></div><div style="position:absolute;left:1336px;top:465px;width:1px;height:31px;background:#f8f9f9"></div><div style="position:absolute;left:1336px;top:497px;width:1px;height:1px;background:#f4f6f6"></div><div style="position:absolute;left:1440px;top:465px;width:1px;height:31px;background:#f8f9f9"></div><div style="position:absolute;left:1440px;top:497px;width:1px;height:1px;background:#f4f6f6"></div><div style="position:absolute;left:1544px;top:465px;width:1px;height:31px;background:#f8f9f9"></div><div style="position:absolute;left:1544px;top:497px;width:1px;height:1px;background:#f4f6f6"></div><div style="position:absolute;left:1646px;top:465px;width:1px;height:31px;background:#f8f9f9"></div><div style="position:absolute;left:1646px;top:497px;width:1px;height:1px;background:#f4f6f6"></div><svg style="position:absolute;left:62px;top:469px" width="20" height="20" viewBox="0 0 20 20"><g fill="#2a3441"><circle cx="10" cy="2.8" r="2.4"/><circle cx="4.9" cy="9.9" r="1.6"/><circle cx="15.1" cy="9.9" r="1.6"/><circle cx="2.4" cy="16.6" r="2.2"/><circle cx="7.5" cy="16.6" r="2.2"/><circle cx="12.5" cy="16.6" r="2.2"/><circle cx="17.6" cy="16.6" r="2.2"/></g><g fill="none" stroke="#2a3441" stroke-width="1.8" stroke-linejoin="round"><path d="M10 3 V5.8 M4.9 9.9 V7.4 Q4.9 5.8 6.5 5.8 H13.5 Q15.1 5.8 15.1 7.4 V9.9 M4.9 9.9 L2.5 16 M4.9 9.9 L7.5 16 M15.1 9.9 L12.5 16 M15.1 9.9 L17.5 16"/></g></svg><div class="t" style="left:82px;top:472px;width:183px;height:16px;line-height:16px;text-align:left;font-size:14.2px;color:#111;letter-spacing:0.64px">Atención al cliente</div><div class="t" style="left:274px;top:472px;width:167px;height:16px;line-height:16px;text-align:left;font-size:14.2px;color:#111;letter-spacing:0.5px">Procesos</div><div class="t" style="left:1341px;top:472px;width:99px;height:16px;line-height:16px;text-align:left;font-size:14.2px;color:#111;letter-spacing:-0.6px">1.00</div><div class="t" style="left:1445px;top:472px;width:99px;height:16px;line-height:16px;text-align:left;font-size:14.2px;color:#111;letter-spacing:1.12px">semanas</div><div style="position:absolute;left:12px;top:498px;width:1717px;height:32px;background:#ffffff"></div><div style="position:absolute;left:12px;top:529px;width:1717px;height:1px;background:#fff"></div><div style="position:absolute;left:12px;top:530px;width:1717px;height:1px;background:#d5dcdc"></div><div style="position:absolute;left:269px;top:498px;width:1px;height:31px;background:#f8f9f9"></div><div style="position:absolute;left:269px;top:530px;width:1px;height:1px;background:#f4f6f6"></div><div style="position:absolute;left:441px;top:498px;width:1px;height:31px;background:#f8f9f9"></div><div style="position:absolute;left:441px;top:530px;width:1px;height:1px;background:#f4f6f6"></div><div style="position:absolute;left:579px;top:498px;width:1px;height:31px;background:#f8f9f9"></div><div style="position:absolute;left:579px;top:530px;width:1px;height:1px;background:#f4f6f6"></div><div style="position:absolute;left:750px;top:498px;width:1px;height:31px;background:#f8f9f9"></div><div style="position:absolute;left:750px;top:530px;width:1px;height:1px;background:#f4f6f6"></div><div style="position:absolute;left:922px;top:498px;width:1px;height:31px;background:#f8f9f9"></div><div style="position:absolute;left:922px;top:530px;width:1px;height:1px;background:#f4f6f6"></div><div style="position:absolute;left:1026px;top:498px;width:1px;height:31px;background:#f8f9f9"></div><div style="position:absolute;left:1026px;top:530px;width:1px;height:1px;background:#f4f6f6"></div><div style="position:absolute;left:1130px;top:498px;width:1px;height:31px;background:#f8f9f9"></div><div style="position:absolute;left:1130px;top:530px;width:1px;height:1px;background:#f4f6f6"></div><div style="position:absolute;left:1232px;top:498px;width:1px;height:31px;background:#f8f9f9"></div><div style="position:absolute;left:1232px;top:530px;width:1px;height:1px;background:#f4f6f6"></div><div style="position:absolute;left:1336px;top:498px;width:1px;height:31px;background:#f8f9f9"></div><div style="position:absolute;left:1336px;top:530px;width:1px;height:1px;background:#f4f6f6"></div><div style="position:absolute;left:1440px;top:498px;width:1px;height:31px;background:#f8f9f9"></div><div style="position:absolute;left:1440px;top:530px;width:1px;height:1px;background:#f4f6f6"></div><div style="position:absolute;left:1544px;top:498px;width:1px;height:31px;background:#f8f9f9"></div><div style="position:absolute;left:1544px;top:530px;width:1px;height:1px;background:#f4f6f6"></div><div style="position:absolute;left:1646px;top:498px;width:1px;height:31px;background:#f8f9f9"></div><div style="position:absolute;left:1646px;top:530px;width:1px;height:1px;background:#f4f6f6"></div><svg style="position:absolute;left:48px;top:504px" width="11" height="11" viewBox="0 0 11 11"><rect x="0.5" y="0.5" width="10" height="10" fill="#fff" stroke="#8f8f8f" stroke-width="1"/><path d="M5.5 2.3 V8.7 M2.3 5.5 H8.7" stroke="#000" stroke-width="1.15"/></svg><svg style="position:absolute;left:62px;top:502px" width="20" height="20" viewBox="0 0 20 20"><g fill="#2a3441"><circle cx="10" cy="2.8" r="2.4"/><circle cx="4.9" cy="9.9" r="1.6"/><circle cx="15.1" cy="9.9" r="1.6"/><circle cx="2.4" cy="16.6" r="2.2"/><circle cx="7.5" cy="16.6" r="2.2"/><circle cx="12.5" cy="16.6" r="2.2"/><circle cx="17.6" cy="16.6" r="2.2"/></g><g fill="none" stroke="#2a3441" stroke-width="1.8" stroke-linejoin="round"><path d="M10 3 V5.8 M4.9 9.9 V7.4 Q4.9 5.8 6.5 5.8 H13.5 Q15.1 5.8 15.1 7.4 V9.9 M4.9 9.9 L2.5 16 M4.9 9.9 L7.5 16 M15.1 9.9 L12.5 16 M15.1 9.9 L17.5 16"/></g></svg><div class="t" style="left:82px;top:505px;width:183px;height:16px;line-height:16px;text-align:left;font-size:14.2px;color:#111;letter-spacing:0.71px">Producción Herramientas</div><div class="t" style="left:274px;top:505px;width:167px;height:16px;line-height:16px;text-align:left;font-size:14.2px;color:#111;letter-spacing:0.5px">Procesos</div><div class="t" style="left:446px;top:505px;width:133px;height:16px;line-height:16px;text-align:left;font-size:14.2px;color:#111;letter-spacing:0.65px">Totalmente Dependiente</div><div class="t" style="left:584px;top:505px;width:166px;height:16px;line-height:16px;text-align:left;font-size:14.2px;color:#111;letter-spacing:-1.07px">100%</div><div class="t" style="left:755px;top:505px;width:167px;height:16px;line-height:16px;text-align:left;font-size:14.2px;color:#111;letter-spacing:0.67px">Crítico</div><div class="t" style="left:927px;top:505px;width:99px;height:16px;line-height:16px;text-align:left;font-size:14.2px;color:#111;letter-spacing:-0.6px">1.00</div><div class="t" style="left:1031px;top:505px;width:99px;height:16px;line-height:16px;text-align:left;font-size:14.2px;color:#111;letter-spacing:1.12px">semanas</div><div class="t" style="left:1135px;top:505px;width:97px;height:16px;line-height:16px;text-align:left;font-size:14.2px;color:#111;letter-spacing:-0.6px">1.00</div><div class="t" style="left:1237px;top:505px;width:99px;height:16px;line-height:16px;text-align:left;font-size:14.2px;color:#111;letter-spacing:1.12px">semanas</div><div class="t" style="left:1341px;top:505px;width:99px;height:16px;line-height:16px;text-align:left;font-size:14.2px;color:#111;letter-spacing:0.0px">3.00</div><div class="t" style="left:1445px;top:505px;width:99px;height:16px;line-height:16px;text-align:left;font-size:14.2px;color:#111;letter-spacing:0.57px">días</div><div class="t" style="left:1549px;top:505px;width:97px;height:16px;line-height:16px;text-align:left;font-size:14.2px;color:#111;letter-spacing:0.07px">0.70</div><div class="t" style="left:1651px;top:505px;width:98px;height:16px;line-height:16px;text-align:left;font-size:14.2px;color:#111;letter-spacing:1.12px">semanas</div><div style="position:absolute;left:12px;top:531px;width:1717px;height:32px;background:#fbfbfb"></div><div style="position:absolute;left:12px;top:562px;width:1717px;height:1px;background:#fff"></div><div style="position:absolute;left:12px;top:563px;width:1717px;height:1px;background:#d5dcdc"></div><div style="position:absolute;left:269px;top:531px;width:1px;height:31px;background:#f8f9f9"></div><div style="position:absolute;left:269px;top:563px;width:1px;height:1px;background:#f4f6f6"></div><div style="position:absolute;left:441px;top:531px;width:1px;height:31px;background:#f8f9f9"></div><div style="position:absolute;left:441px;top:563px;width:1px;height:1px;background:#f4f6f6"></div><div style="position:absolute;left:579px;top:531px;width:1px;height:31px;background:#f8f9f9"></div><div style="position:absolute;left:579px;top:563px;width:1px;height:1px;background:#f4f6f6"></div><div style="position:absolute;left:750px;top:531px;width:1px;height:31px;background:#f8f9f9"></div><div style="position:absolute;left:750px;top:563px;width:1px;height:1px;background:#f4f6f6"></div><div style="position:absolute;left:922px;top:531px;width:1px;height:31px;background:#f8f9f9"></div><div style="position:absolute;left:922px;top:563px;width:1px;height:1px;background:#f4f6f6"></div><div style="position:absolute;left:1026px;top:531px;width:1px;height:31px;background:#f8f9f9"></div><div style="position:absolute;left:1026px;top:563px;width:1px;height:1px;background:#f4f6f6"></div><div style="position:absolute;left:1130px;top:531px;width:1px;height:31px;background:#f8f9f9"></div><div style="position:absolute;left:1130px;top:563px;width:1px;height:1px;background:#f4f6f6"></div><div style="position:absolute;left:1232px;top:531px;width:1px;height:31px;background:#f8f9f9"></div><div style="position:absolute;left:1232px;top:563px;width:1px;height:1px;background:#f4f6f6"></div><div style="position:absolute;left:1336px;top:531px;width:1px;height:31px;background:#f8f9f9"></div><div style="position:absolute;left:1336px;top:563px;width:1px;height:1px;background:#f4f6f6"></div><div style="position:absolute;left:1440px;top:531px;width:1px;height:31px;background:#f8f9f9"></div><div style="position:absolute;left:1440px;top:563px;width:1px;height:1px;background:#f4f6f6"></div><div style="position:absolute;left:1544px;top:531px;width:1px;height:31px;background:#f8f9f9"></div><div style="position:absolute;left:1544px;top:563px;width:1px;height:1px;background:#f4f6f6"></div><div style="position:absolute;left:1646px;top:531px;width:1px;height:31px;background:#f8f9f9"></div><div style="position:absolute;left:1646px;top:563px;width:1px;height:1px;background:#f4f6f6"></div><svg style="position:absolute;left:48px;top:537px" width="11" height="11" viewBox="0 0 11 11"><rect x="0.5" y="0.5" width="10" height="10" fill="#fff" stroke="#8f8f8f" stroke-width="1"/><path d="M5.5 2.3 V8.7 M2.3 5.5 H8.7" stroke="#000" stroke-width="1.15"/></svg><svg style="position:absolute;left:62px;top:535px" width="20" height="20" viewBox="0 0 20 20"><g fill="#2a3441"><circle cx="10" cy="2.8" r="2.4"/><circle cx="4.9" cy="9.9" r="1.6"/><circle cx="15.1" cy="9.9" r="1.6"/><circle cx="2.4" cy="16.6" r="2.2"/><circle cx="7.5" cy="16.6" r="2.2"/><circle cx="12.5" cy="16.6" r="2.2"/><circle cx="17.6" cy="16.6" r="2.2"/></g><g fill="none" stroke="#2a3441" stroke-width="1.8" stroke-linejoin="round"><path d="M10 3 V5.8 M4.9 9.9 V7.4 Q4.9 5.8 6.5 5.8 H13.5 Q15.1 5.8 15.1 7.4 V9.9 M4.9 9.9 L2.5 16 M4.9 9.9 L7.5 16 M15.1 9.9 L12.5 16 M15.1 9.9 L17.5 16"/></g></svg><div class="t" style="left:82px;top:538px;width:183px;height:16px;line-height:16px;text-align:left;font-size:14.2px;color:#111;letter-spacing:-1.33px">RRHH</div><div class="t" style="left:274px;top:538px;width:167px;height:16px;line-height:16px;text-align:left;font-size:14.2px;color:#111;letter-spacing:0.5px">Procesos</div><div class="t" style="left:446px;top:538px;width:133px;height:16px;line-height:16px;text-align:left;font-size:14.2px;color:#111;letter-spacing:0.65px">Totalmente Dependiente</div><div class="t" style="left:584px;top:538px;width:166px;height:16px;line-height:16px;text-align:left;font-size:14.2px;color:#111;letter-spacing:-1.07px">100%</div><div class="t" style="left:755px;top:538px;width:167px;height:16px;line-height:16px;text-align:left;font-size:14.2px;color:#111;letter-spacing:0.67px">Crítico</div><div class="t" style="left:1135px;top:538px;width:97px;height:16px;line-height:16px;text-align:left;font-size:14.2px;color:#111;letter-spacing:-0.6px">1.00</div><div class="t" style="left:1237px;top:538px;width:99px;height:16px;line-height:16px;text-align:left;font-size:14.2px;color:#111;letter-spacing:1.12px">semanas</div><div class="t" style="left:1341px;top:538px;width:99px;height:16px;line-height:16px;text-align:left;font-size:14.2px;color:#111;letter-spacing:0.0px">3.00</div><div class="t" style="left:1445px;top:538px;width:99px;height:16px;line-height:16px;text-align:left;font-size:14.2px;color:#111;letter-spacing:0.57px">días</div><div style="position:absolute;left:12px;top:564px;width:1717px;height:32px;background:#ffffff"></div><div style="position:absolute;left:12px;top:595px;width:1717px;height:1px;background:#fff"></div><div style="position:absolute;left:12px;top:596px;width:1717px;height:1px;background:#d5dcdc"></div><div style="position:absolute;left:269px;top:564px;width:1px;height:31px;background:#f8f9f9"></div><div style="position:absolute;left:269px;top:596px;width:1px;height:1px;background:#f4f6f6"></div><div style="position:absolute;left:441px;top:564px;width:1px;height:31px;background:#f8f9f9"></div><div style="position:absolute;left:441px;top:596px;width:1px;height:1px;background:#f4f6f6"></div><div style="position:absolute;left:579px;top:564px;width:1px;height:31px;background:#f8f9f9"></div><div style="position:absolute;left:579px;top:596px;width:1px;height:1px;background:#f4f6f6"></div><div style="position:absolute;left:750px;top:564px;width:1px;height:31px;background:#f8f9f9"></div><div style="position:absolute;left:750px;top:596px;width:1px;height:1px;background:#f4f6f6"></div><div style="position:absolute;left:922px;top:564px;width:1px;height:31px;background:#f8f9f9"></div><div style="position:absolute;left:922px;top:596px;width:1px;height:1px;background:#f4f6f6"></div><div style="position:absolute;left:1026px;top:564px;width:1px;height:31px;background:#f8f9f9"></div><div style="position:absolute;left:1026px;top:596px;width:1px;height:1px;background:#f4f6f6"></div><div style="position:absolute;left:1130px;top:564px;width:1px;height:31px;background:#f8f9f9"></div><div style="position:absolute;left:1130px;top:596px;width:1px;height:1px;background:#f4f6f6"></div><div style="position:absolute;left:1232px;top:564px;width:1px;height:31px;background:#f8f9f9"></div><div style="position:absolute;left:1232px;top:596px;width:1px;height:1px;background:#f4f6f6"></div><div style="position:absolute;left:1336px;top:564px;width:1px;height:31px;background:#f8f9f9"></div><div style="position:absolute;left:1336px;top:596px;width:1px;height:1px;background:#f4f6f6"></div><div style="position:absolute;left:1440px;top:564px;width:1px;height:31px;background:#f8f9f9"></div><div style="position:absolute;left:1440px;top:596px;width:1px;height:1px;background:#f4f6f6"></div><div style="position:absolute;left:1544px;top:564px;width:1px;height:31px;background:#f8f9f9"></div><div style="position:absolute;left:1544px;top:596px;width:1px;height:1px;background:#f4f6f6"></div><div style="position:absolute;left:1646px;top:564px;width:1px;height:31px;background:#f8f9f9"></div><div style="position:absolute;left:1646px;top:596px;width:1px;height:1px;background:#f4f6f6"></div><svg style="position:absolute;left:48px;top:570px" width="11" height="11" viewBox="0 0 11 11"><rect x="0.5" y="0.5" width="10" height="10" fill="#fff" stroke="#8f8f8f" stroke-width="1"/><path d="M5.5 2.3 V8.7 M2.3 5.5 H8.7" stroke="#000" stroke-width="1.15"/></svg><svg style="position:absolute;left:62px;top:569px" width="20" height="20" viewBox="0 0 20 20"><g fill="#2a3441"><circle cx="10" cy="2.8" r="2.4"/><circle cx="4.9" cy="9.9" r="1.6"/><circle cx="15.1" cy="9.9" r="1.6"/><circle cx="2.4" cy="16.6" r="2.2"/><circle cx="7.5" cy="16.6" r="2.2"/><circle cx="12.5" cy="16.6" r="2.2"/><circle cx="17.6" cy="16.6" r="2.2"/></g><g fill="none" stroke="#2a3441" stroke-width="1.8" stroke-linejoin="round"><path d="M10 3 V5.8 M4.9 9.9 V7.4 Q4.9 5.8 6.5 5.8 H13.5 Q15.1 5.8 15.1 7.4 V9.9 M4.9 9.9 L2.5 16 M4.9 9.9 L7.5 16 M15.1 9.9 L12.5 16 M15.1 9.9 L17.5 16"/></g></svg><div class="t" style="left:82px;top:572px;width:183px;height:16px;line-height:16px;text-align:left;font-size:14.2px;color:#111;letter-spacing:0.82px">Soporte</div><div class="t" style="left:274px;top:572px;width:167px;height:16px;line-height:16px;text-align:left;font-size:14.2px;color:#111;letter-spacing:0.5px">Procesos</div><div class="t" style="left:446px;top:572px;width:133px;height:16px;line-height:16px;text-align:left;font-size:14.2px;color:#111;letter-spacing:0.65px">Totalmente Dependiente</div><div class="t" style="left:584px;top:572px;width:166px;height:16px;line-height:16px;text-align:left;font-size:14.2px;color:#111;letter-spacing:-1.07px">100%</div><div class="t" style="left:755px;top:572px;width:167px;height:16px;line-height:16px;text-align:left;font-size:14.2px;color:#111;letter-spacing:0.67px">Crítico</div><div class="t" style="left:1135px;top:572px;width:97px;height:16px;line-height:16px;text-align:left;font-size:14.2px;color:#111;letter-spacing:0.0px">3.00</div><div class="t" style="left:1237px;top:572px;width:99px;height:16px;line-height:16px;text-align:left;font-size:14.2px;color:#111;letter-spacing:0.57px">días</div><div class="t" style="left:1341px;top:572px;width:99px;height:16px;line-height:16px;text-align:left;font-size:14.2px;color:#111;letter-spacing:0.0px">3.00</div><div class="t" style="left:1445px;top:572px;width:99px;height:16px;line-height:16px;text-align:left;font-size:14.2px;color:#111;letter-spacing:0.57px">días</div>
</body></html>
